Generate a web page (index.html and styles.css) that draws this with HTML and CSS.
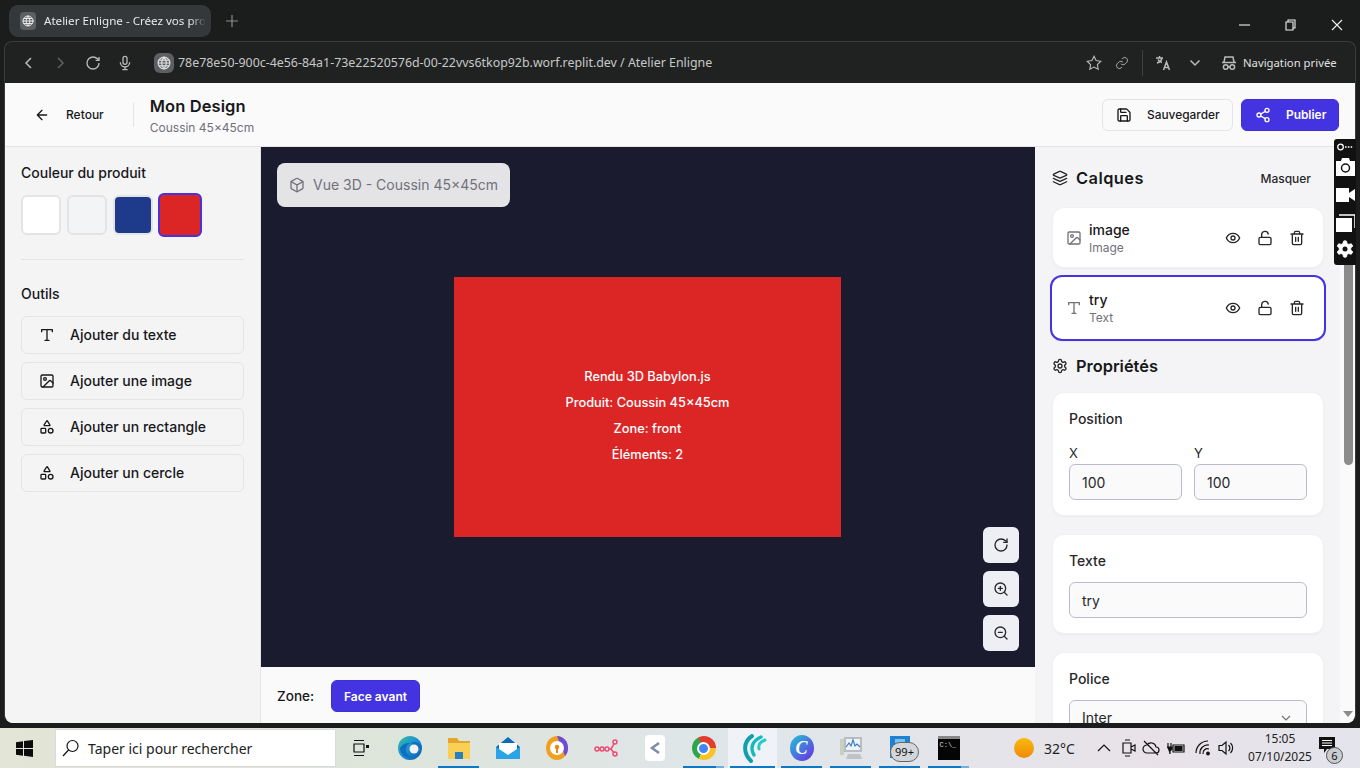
FILE: index.html
```html
<!DOCTYPE html>
<html lang="fr">
<head>
<meta charset="utf-8">
<title>Atelier Enligne</title>
<link rel="stylesheet" href="styles.css">
</head>
<body>
<svg class="defs" width="0" height="0" aria-hidden="true">
  <symbol id="i-globe" viewBox="0 0 24 24"><circle cx="12" cy="12" r="10"/><path d="M12 2a14.5 14.5 0 0 0 0 20 14.5 14.5 0 0 0 0-20M2 12h20M3.5 7h17M3.5 17h17"/></symbol>
  <symbol id="i-arrow" viewBox="0 0 24 24"><path d="M12 19l-7-7 7-7M19 12H5"/></symbol>
  <symbol id="i-save" viewBox="0 0 24 24"><path d="M15.2 3a2 2 0 0 1 1.4.6l3.8 3.8a2 2 0 0 1 .6 1.4V19a2 2 0 0 1-2 2H5a2 2 0 0 1-2-2V5a2 2 0 0 1 2-2z"/><path d="M17 21v-7a1 1 0 0 0-1-1H8a1 1 0 0 0-1 1v7"/><path d="M7 3v4a1 1 0 0 0 1 1h7"/></symbol>
  <symbol id="i-share" viewBox="0 0 24 24"><circle cx="18" cy="5" r="3"/><circle cx="6" cy="12" r="3"/><circle cx="18" cy="19" r="3"/><path d="M8.59 13.51l6.83 3.98M15.41 6.51l-6.82 3.98"/></symbol>
  <symbol id="i-type" viewBox="0 0 24 24"><path d="M4 7V4h16v3M9 20h6M12 4v16"/></symbol>
  <symbol id="i-image" viewBox="0 0 24 24"><rect x="3" y="3" width="18" height="18" rx="2"/><circle cx="9" cy="9" r="2"/><path d="m21 15-3.086-3.086a2 2 0 0 0-2.828 0L6 21"/></symbol>
  <symbol id="i-shapes" viewBox="0 0 24 24"><path d="M8.3 10a.7.7 0 0 1-.626-1.079L11.4 3a.7.7 0 0 1 1.198-.043L16.3 8.9a.7.7 0 0 1-.572 1.1Z"/><rect x="3" y="14" width="7" height="7" rx="1"/><circle cx="17.5" cy="17.5" r="3.5"/></symbol>
  <symbol id="i-box" viewBox="0 0 24 24"><path d="M21 8a2 2 0 0 0-1-1.73l-7-4a2 2 0 0 0-2 0l-7 4A2 2 0 0 0 3 8v8a2 2 0 0 0 1 1.73l7 4a2 2 0 0 0 2 0l7-4A2 2 0 0 0 21 16Z"/><path d="m3.3 7 8.7 5 8.7-5M12 22V12"/></symbol>
  <symbol id="i-rotate" viewBox="0 0 24 24"><path d="M21 12a9 9 0 1 1-9-9c2.52 0 4.93 1 6.74 2.74L21 8"/><path d="M21 3v5h-5"/></symbol>
  <symbol id="i-zoomin" viewBox="0 0 24 24"><circle cx="11" cy="11" r="8"/><path d="m21 21-4.3-4.3M11 8v6M8 11h6"/></symbol>
  <symbol id="i-zoomout" viewBox="0 0 24 24"><circle cx="11" cy="11" r="8"/><path d="m21 21-4.3-4.3M8 11h6"/></symbol>
  <symbol id="i-layers" viewBox="0 0 24 24"><path d="M12.83 2.18a2 2 0 0 0-1.66 0L2.6 6.08a1 1 0 0 0 0 1.83l8.58 3.91a2 2 0 0 0 1.66 0l8.58-3.9a1 1 0 0 0 0-1.83Z"/><path d="m22 17.65-9.17 4.16a2 2 0 0 1-1.66 0L2 17.65"/><path d="m22 12.65-9.17 4.16a2 2 0 0 1-1.66 0L2 12.65"/></symbol>
  <symbol id="i-eye" viewBox="0 0 24 24"><path d="M2 12s3-7 10-7 10 7 10 7-3 7-10 7-10-7-10-7Z"/><circle cx="12" cy="12" r="3"/></symbol>
  <symbol id="i-unlock" viewBox="0 0 24 24"><rect x="3" y="11" width="18" height="11" rx="2"/><path d="M7 11V7a5 5 0 0 1 9.9-1"/></symbol>
  <symbol id="i-trash" viewBox="0 0 24 24"><path d="M3 6h18M19 6v14c0 1-1 2-2 2H7c-1 0-2-1-2-2V6M8 6V4c0-1 1-2 2-2h4c1 0 2 1 2 2v2M10 11v6M14 11v6"/></symbol>
  <symbol id="i-gear" viewBox="0 0 24 24"><path d="M12.22 2h-.44a2 2 0 0 0-2 2v.18a2 2 0 0 1-1 1.73l-.43.25a2 2 0 0 1-2 0l-.15-.08a2 2 0 0 0-2.73.73l-.22.38a2 2 0 0 0 .73 2.73l.15.1a2 2 0 0 1 1 1.72v.51a2 2 0 0 1-1 1.74l-.15.09a2 2 0 0 0-.73 2.73l.22.38a2 2 0 0 0 2.73.73l.15-.08a2 2 0 0 1 2 0l.43.25a2 2 0 0 1 1 1.73V20a2 2 0 0 0 2 2h.44a2 2 0 0 0 2-2v-.18a2 2 0 0 1 1-1.73l.43-.25a2 2 0 0 1 2 0l.15.08a2 2 0 0 0 2.73-.73l.22-.39a2 2 0 0 0-.73-2.73l-.15-.08a2 2 0 0 1-1-1.74v-.5a2 2 0 0 1 1-1.74l.15-.09a2 2 0 0 0 .73-2.73l-.22-.38a2 2 0 0 0-2.73-.73l-.15.08a2 2 0 0 1-2 0l-.43-.25a2 2 0 0 1-1-1.73V4a2 2 0 0 0-2-2z"/><circle cx="12" cy="12" r="3"/></symbol>
</svg>

<div class="tabstrip">
  <div class="tab">
    <span class="favicon"><svg class="ic ic-12"><use href="#i-globe"/></svg></span>
    <span class="tab-title">Atelier Enligne - Créez vos pro</span>
  </div>
  <svg class="newtab" width="12" height="12" viewBox="0 0 12 12"><path d="M6 0v12M0 6h12"/></svg>
  <div class="winctl">
    <svg width="12" height="12" viewBox="0 0 12 12"><path d="M0 6h11"/></svg>
    <svg width="12" height="12" viewBox="0 0 12 12"><path d="M1 3h7v8H1zM3 3V1h7v8H8"/></svg>
    <svg width="12" height="12" viewBox="0 0 12 12"><path d="M1 1l10 10M11 1L1 11"/></svg>
  </div>
</div>

<div class="browser">
  <div class="toolbar">
    <svg class="tb-ic tb-back" width="16" height="16" viewBox="0 0 16 16"><path d="M10 3L5 8l5 5"/></svg>
    <svg class="tb-ic tb-fwd" width="16" height="16" viewBox="0 0 16 16"><path d="M6 3l5 5-5 5"/></svg>
    <svg class="tb-ic tb-reload" width="16" height="16" viewBox="0 0 24 24"><path d="M21 12a9 9 0 1 1-9-9c2.52 0 4.93 1 6.74 2.74L21 8"/><path d="M21 3v5h-5"/></svg>
    <svg class="tb-ic tb-mic" width="16" height="16" viewBox="0 0 24 24"><rect x="9" y="2" width="6" height="12" rx="3"/><path d="M5 11a7 7 0 0 0 14 0M12 18v4M8 22h8"/></svg>
    <span class="urlglobe"><svg class="ic ic-14"><use href="#i-globe"/></svg></span>
    <span class="url">78e78e50-900c-4e56-84a1-73e22520576d-00-22vvs6tkop92b.worf.replit.dev / Atelier Enligne</span>
    <svg class="tb-ic tb-star" width="18" height="18" viewBox="0 0 24 24"><path d="M12 3l2.8 5.8 6.2.9-4.500 4.400 1.100 6.300L12 17.400l-5.600 3 1.100-6.300L3 9.700l6.200-.9z"/></svg>
    <svg class="tb-ic tb-link" width="14" height="14" viewBox="0 0 24 24"><path d="M10 13a5 5 0 0 0 7.500.5l3-3a5 5 0 0 0-7-7l-1.700 1.700M14 11a5 5 0 0 0-7.500-.5l-3 3a5 5 0 0 0 7 7l1.700-1.700"/></svg>
    <span class="tb-sep"></span>
    <svg class="tb-ic tb-tr" width="16" height="16" viewBox="0 0 16 16"><path d="M1 3h7M4.500 1v2M7 3c-.5 2.500-2 4-5 5M3 4.500c.7 1.500 2 2.500 4 3M8.500 15l3-8 3 8M9.500 12.500h4"/></svg>
    <svg class="tb-ic tb-chev" width="12" height="12" viewBox="0 0 12 12"><path d="M1.500 3.500L6 8l4.500-4.500"/></svg>
    <svg class="tb-ic tb-inc" width="16" height="16" viewBox="0 0 16 16"><path d="M3 7l1-5h8l1 5M1 7.500h14"/><circle cx="4.700" cy="12" r="2.300"/><circle cx="11.300" cy="12" r="2.300"/><path d="M7 12h2"/></svg>
    <span class="private">Navigation privée</span>
  </div>

  <div class="app">
    <header class="apphead">
      <button class="back"><svg class="ic ic-16"><use href="#i-arrow"/></svg><span>Retour</span></button>
      <span class="vsep"></span>
      <div class="titles">
        <div class="design">Mon Design</div>
        <div class="product">Coussin 45×45cm</div>
      </div>
      <div class="actions">
        <button class="btn btn-out"><svg class="ic ic-16"><use href="#i-save"/></svg><span>Sauvegarder</span></button>
        <button class="btn btn-pri"><svg class="ic ic-16"><use href="#i-share"/></svg><span>Publier</span></button>
      </div>
    </header>

    <div class="workspace">
      <aside class="left">
        <h3 class="sec-title">Couleur du produit</h3>
        <div class="swatches">
          <span class="sw sw-white"></span>
          <span class="sw sw-gray"></span>
          <span class="sw sw-navy"></span>
          <span class="sw sw-red"></span>
        </div>
        <div class="hr"></div>
        <h3 class="sec-title sec-tools">Outils</h3>
        <div class="tools">
          <button class="tool"><svg class="ic ic-16"><use href="#i-type"/></svg><span>Ajouter du texte</span></button>
          <button class="tool"><svg class="ic ic-16"><use href="#i-image"/></svg><span>Ajouter une image</span></button>
          <button class="tool"><svg class="ic ic-16"><use href="#i-shapes"/></svg><span>Ajouter un rectangle</span></button>
          <button class="tool"><svg class="ic ic-16"><use href="#i-shapes"/></svg><span>Ajouter un cercle</span></button>
        </div>
      </aside>

      <main class="center">
        <div class="stage">
          <div class="badge"><svg class="ic ic-16"><use href="#i-box"/></svg><span>Vue 3D - Coussin 45×45cm</span></div>
          <div class="render">
            <p>Rendu 3D Babylon.js</p>
            <p>Produit: Coussin 45×45cm</p>
            <p>Zone: front</p>
            <p>Éléments: 2</p>
          </div>
          <div class="stagectl">
            <button class="sbtn"><svg class="ic ic-16"><use href="#i-rotate"/></svg></button>
            <button class="sbtn"><svg class="ic ic-16"><use href="#i-zoomin"/></svg></button>
            <button class="sbtn"><svg class="ic ic-16"><use href="#i-zoomout"/></svg></button>
          </div>
        </div>
        <div class="zonebar">
          <span class="zlabel">Zone:</span>
          <button class="zbtn">Face avant</button>
        </div>
      </main>

      <aside class="right">
        <div class="rhead">
          <svg class="ic ic-16"><use href="#i-layers"/></svg>
          <h2 class="rtitle rtitle-wide">Calques</h2>
          <span class="masquer">Masquer</span>
        </div>
        <div class="layer">
          <svg class="ic ic-16 lt-ic"><use href="#i-image"/></svg>
          <div class="lt"><div class="lname">image</div><div class="ltype">Image</div></div>
          <div class="lacts"><svg class="ic ic-16"><use href="#i-eye"/></svg><svg class="ic ic-16"><use href="#i-unlock"/></svg><svg class="ic ic-16"><use href="#i-trash"/></svg></div>
        </div>
        <div class="layer layer-sel">
          <svg class="ic ic-16 lt-ic"><use href="#i-type"/></svg>
          <div class="lt"><div class="lname">try</div><div class="ltype">Text</div></div>
          <div class="lacts"><svg class="ic ic-16"><use href="#i-eye"/></svg><svg class="ic ic-16"><use href="#i-unlock"/></svg><svg class="ic ic-16"><use href="#i-trash"/></svg></div>
        </div>
        <div class="rhead rhead-props">
          <svg class="ic ic-16"><use href="#i-gear"/></svg>
          <h2 class="rtitle">Propriétés</h2>
        </div>
        <section class="card">
          <h4 class="clabel clabel-pos">Position</h4>
          <div class="xy">
            <div class="xyf"><div class="xl">X</div><div class="field">100</div></div>
            <div class="xyf"><div class="xl">Y</div><div class="field">100</div></div>
          </div>
        </section>
        <section class="card">
          <h4 class="clabel">Texte</h4>
          <div class="field">try</div>
        </section>
        <section class="card">
          <h4 class="clabel">Police</h4>
          <div class="field field-sel"><span>Inter</span><svg width="12" height="12" viewBox="0 0 12 12"><path d="M2 4l4 4 4-4"/></svg></div>
        </section>
      </aside>

      <div class="scrollbar">
        <div class="thumb"></div>
        <svg class="sarrow" width="10" height="6" viewBox="0 0 10 6"><path d="M0 0h10L5 6z"/></svg>
      </div>
    </div>
  </div>
</div>

<div class="taskbar">
  <svg class="winlogo" width="17" height="17" viewBox="0 0 17 17"><path d="M0 2.300l7-1v6.700H0zM8 1.100L17 0v8H8zM0 9h7v6.700l-7-1zM8 9h9v8l-9-1.200z"/></svg>
  <div class="search">
    <svg width="18" height="18" viewBox="0 0 18 18"><circle cx="10.500" cy="7" r="5.500"/><path d="M6.500 11L1 17"/></svg>
    <span>Taper ici pour rechercher</span>
  </div>
  <div class="slot"><svg width="16" height="18" viewBox="0 0 16 18"><path d="M1 1.500h10M1 16.500h10M1 5h10v8H1z" fill="none" stroke="#111" stroke-width="1.200"/><rect x="13" y="6" width="3" height="3" fill="#111"/></svg></div>
  <div class="slot"><svg width="26" height="26" viewBox="0 0 26 26"><defs><linearGradient id="ed" x1="0" y1="0" x2="1" y2="1"><stop offset="0" stop-color="#35c1a0"/><stop offset=".5" stop-color="#1b8fd6"/><stop offset="1" stop-color="#0c59a4"/></linearGradient></defs><circle cx="13" cy="13" r="12" fill="url(#ed)"/><path d="M25 14c0-5-4-7-8-7-5 0-8 4-8 8 0 4 3 7 7 7-5 2-13-1-13-9 4-6 9-5 10-5 3 0 5 3 4 6z" fill="#0e6fc0"/><circle cx="17" cy="14" r="4.500" fill="#f2f1ee"/></svg></div>
  <div class="slot slot-on"><svg width="24" height="22" viewBox="0 0 24 22"><path d="M1 1h9l2 3h11v4H1z" fill="#e3a62b"/><path d="M1 6h22v16H1z" fill="#f9cf55"/><path d="M8 15h8v7H8z" fill="#2a7fc1"/></svg></div>
  <div class="slot"><svg width="24" height="24" viewBox="0 0 24 24"><path d="M12 1l12 10v12H0V11z" fill="#0d6cb8"/><path d="M3 7h18v9l-9 4-9-4z" fill="#fff"/><path d="M0 11l12 8 12-8v12H0z" fill="#29a4e8"/></svg></div>
  <div class="slot"><svg width="24" height="26" viewBox="0 0 24 26"><ellipse cx="12" cy="13" rx="11" ry="12" fill="#f0a020"/><path d="M12 1c6 0 11 5 11 12 0 3-1 6-3 8z" fill="#6d4bd8"/><circle cx="12" cy="13" r="7" fill="#fff"/><circle cx="12" cy="12" r="2.200" fill="#e8861c"/><path d="M11 13h2v5h-2z" fill="#e8861c"/></svg></div>
  <div class="slot"><svg width="24" height="18" viewBox="0 0 24 18" fill="none" stroke="#ee4a72" stroke-width="1.500"><circle cx="3" cy="10" r="2"/><circle cx="8" cy="10" r="2"/><circle cx="13" cy="10" r="2"/><circle cx="21" cy="3" r="2"/><circle cx="21" cy="15" r="2"/><path d="M15 10h2l3-5M17 10l3 4"/></svg></div>
  <div class="slot"><span class="whitebox"><svg width="14" height="14" viewBox="0 0 14 14" fill="none" stroke="#7d8ca8" stroke-width="2.500"><path d="M11 2L4 7l7 5"/></svg></span></div>
  <div class="slot slot-on slot-stack"><span class="chrome"><span class="chrome-in"></span></span></div>
  <div class="slot slot-on slot-act"><svg width="28" height="30" viewBox="0 0 28 30" fill="none" stroke-linecap="round"><path d="M12 28C4 20 4 9 13 3" stroke="#119fae" stroke-width="4"/><path d="M15 22C11 15 13 8 22 4" stroke="#17b9bf" stroke-width="3.500"/><path d="M20 16c-1-4 1-7 6-9" stroke="#2cc8c8" stroke-width="3"/></svg></div>
  <div class="slot slot-on"><span class="canva">C</span></div>
  <div class="slot slot-on"><svg width="26" height="26" viewBox="0 0 26 26"><path d="M2 4h4v16H2z" fill="#c9cfbf"/><path d="M6 2h18v15H6z" fill="#b9bcc2"/><path d="M8 4h14v11H8z" fill="#eef3f8"/><path d="M8 12l3-4 2 3 2-6 2 6 2-2 3 3" fill="none" stroke="#3b7dc6" stroke-width="1.200"/><path d="M10 19h12l2 5H8z" fill="#bfc3c8"/></svg></div>
  <div class="slot slot-on"><svg width="24" height="26" viewBox="0 0 24 26"><path d="M2 1h20v22H2z" fill="#1f82d0"/><path d="M7 4h10v4H7z" fill="#7cc0ee"/></svg><span class="cnt">99+</span></div>
  <div class="slot slot-on slot-stack"><span class="term"><span class="term-t">C:\_</span></span></div>
  <div class="tray">
    <span class="sun"></span>
    <span class="temp">32°C</span>
    <svg class="tic t-caret" width="14" height="10" viewBox="0 0 14 10"><path d="M1 8l6-6 6 6"/></svg>
    <svg class="tic t-cam" width="14" height="20" viewBox="0 0 14 20"><path d="M1 5h8v10H1zM9 9l4-2v6l-4-2zM3 2h5M3 18h5"/></svg>
    <svg class="tic t-cloud" width="18" height="16" viewBox="0 0 18 16"><path d="M5 13a4 4 0 0 1 0-8 5 5 0 0 1 9 2 3 3 0 0 1 0 6zM2 1l14 14"/></svg>
    <svg class="tic t-bat" width="18" height="16" viewBox="0 0 18 16"><path d="M6 5h11v7H6z"/><path d="M8 6.500h7v4H8zM1 3v4M4 3v4M0 7h5v2l-2 2v3" fill="#111"/></svg>
    <svg class="tic t-wifi" width="18" height="16" viewBox="0 0 18 16"><path d="M1 13A12 12 0 0 1 13 1M5 14a8 8 0 0 1 9-9M8 14a4.500 4.500 0 0 1 6-5"/><circle cx="13" cy="13.500" r="1.300" fill="#111"/></svg>
    <svg class="tic t-vol" width="16" height="16" viewBox="0 0 16 16"><path d="M1 5.500h3L8 2v12l-4-3.500H1zM10.500 5a4 4 0 0 1 0 6M12.500 3a7 7 0 0 1 0 10"/></svg>
    <div class="clock"><div>15:05</div><div>07/10/2025</div></div>
    <div class="notif">
      <svg width="16" height="16" viewBox="0 0 16 16"><path d="M0 0h16v12H8l-3 4v-4H0z" fill="#111"/><path d="M3 3.500h10M3 6h10M3 8.500h10" stroke="#fff"/></svg>
      <span class="ncnt">6</span>
    </div>
  </div>
</div>

<div class="capture">
  <svg class="cap-top" width="16" height="8" viewBox="0 0 16 8"><circle cx="3.500" cy="4" r="2.800" fill="none" stroke="#fff" stroke-width="1.300"/><path d="M8 4h1.600M10.800 4h1.600M13.600 4h1.600" stroke="#fff" stroke-width="1.600"/></svg>
  <svg class="cap-cam" width="19" height="18" viewBox="0 0 19 18"><path d="M0 3h5l1-3h7l1 3h5v15H0z" fill="#fff"/><circle cx="9.500" cy="10" r="4" fill="none" stroke="#111" stroke-width="1.500"/></svg>
  <svg class="cap-vid" width="19" height="14" viewBox="0 0 19 14"><path d="M0 0h13v14H0zM13 5l6-4v12l-6-4z" fill="#fff"/></svg>
  <svg class="cap-win" width="19" height="18" viewBox="0 0 19 18"><path d="M0 4h16v14H0z" fill="#fff"/><path d="M3 1h16v13" fill="none" stroke="#fff" stroke-width="1.500"/></svg>
  <svg class="cap-gear" width="20" height="20" viewBox="0 0 24 24"><path class="capgear" d="M12.220 2h-.44a2 2 0 0 0-2 2v.18a2 2 0 0 1-1 1.730l-.43.25a2 2 0 0 1-2 0l-.15-.08a2 2 0 0 0-2.730.73l-.22.38a2 2 0 0 0 .73 2.730l.15.1a2 2 0 0 1 1 1.720v.51a2 2 0 0 1-1 1.740l-.15.09a2 2 0 0 0-.73 2.730l.22.38a2 2 0 0 0 2.730.73l.15-.08a2 2 0 0 1 2 0l.43.25a2 2 0 0 1 1 1.730V20a2 2 0 0 0 2 2h.44a2 2 0 0 0 2-2v-.18a2 2 0 0 1 1-1.730l.43-.25a2 2 0 0 1 2 0l.15.08a2 2 0 0 0 2.730-.73l.22-.39a2 2 0 0 0-.73-2.730l-.15-.08a2 2 0 0 1-1-1.740v-.5a2 2 0 0 1 1-1.740l.15-.09a2 2 0 0 0 .73-2.730l-.22-.38a2 2 0 0 0-2.730-.73l-.15.08a2 2 0 0 1-2 0l-.43-.25a2 2 0 0 1-1-1.730V4a2 2 0 0 0-2-2z"/><circle cx="12" cy="12" r="3" fill="#111"/></svg>
</div>
</body>
</html>
```

FILE: styles.css
```css
* { box-sizing: border-box; }
html, body { margin: 0; padding: 0; height: 768px; overflow: hidden; }
body {
  width: 1360px;
  background: #1b1c1c;
  display: flex;
  flex-direction: column;
  font-family: Inter, "Liberation Sans", sans-serif;
  color: #18181b;
  position: relative;
}
.defs { position: absolute; }
button { font: inherit; color: inherit; cursor: pointer; }
h2, h3, h4, p { margin: 0; font-weight: inherit; font-size: inherit; }
.ic { fill: none; stroke: currentColor; stroke-width: 2; stroke-linecap: round; stroke-linejoin: round; flex: none; }
.ic-12 { width: 12px; height: 12px; }
.ic-14 { width: 14px; height: 14px; }
.ic-16 { width: 16px; height: 16px; }

/* browser chrome */
.tabstrip { height: 41px; flex: none; display: flex; align-items: flex-start; padding: 5px 0 0 9px; }
.tab { width: 202px; height: 32px; background: #35383a; border-radius: 9px; display: flex; align-items: center; padding-left: 11px; gap: 8px; overflow: hidden; }
.favicon { width: 16px; height: 18px; border-radius: 4px; background: #5c6063; color: #e8e8e8; display: flex; align-items: center; justify-content: center; flex: none; }
.tab-title { font: 11.6px "Noto Sans", sans-serif; color: #e8e8e8; white-space: nowrap; padding-bottom: 2px; -webkit-mask-image: linear-gradient(90deg, #000 90%, transparent); mask-image: linear-gradient(90deg, #000 90%, transparent); }
.newtab { margin: 10px 0 0 15px; stroke: #8b8d8e; stroke-width: 1.200; fill: none; }
.winctl { margin-left: auto; display: flex; gap: 34px; padding: 14px 17px 0 0; }
.winctl svg { fill: none; stroke: #f0f0f0; stroke-width: 1.100; }
.browser { height: 682px; flex: none; margin: 0 4px; border: 1px solid #3a3c3c; border-bottom: 0; border-radius: 8px; overflow: hidden; display: flex; flex-direction: column; background: #202222; }
.toolbar { height: 41px; flex: none; display: flex; align-items: center; color: #c9cacb; padding-left: 16px; }
.tb-ic { fill: none; stroke: #b8babb; stroke-width: 1.500; flex: none; }
.tb-fwd { margin-left: 15px; stroke: #5e6061; }
.tb-reload { margin-left: 17px; stroke-width: 2; }
.tb-mic { margin-left: 16px; stroke-width: 2; }
.urlglobe { width: 20px; height: 20px; border-radius: 6px; background: #5c6063; color: #e0e0e0; display: flex; align-items: center; justify-content: center; margin-left: 21px; flex: none; }
.url { margin-left: 4px; font: 12.4px "Noto Sans", sans-serif; color: #c7c8c8; white-space: nowrap; width: 900px; flex: none; }
.tb-star { margin-left: 7px; }
.tb-link { margin-left: 12px; }
.tb-sep { width: 1px; height: 26px; background: #3f4141; margin-left: 13px; flex: none; }
.tb-tr { margin-left: 12px; }
.tb-chev { margin-left: 18px; }
.tb-inc { margin-left: 20px; }
.private { margin-left: 6px; font: 11.3px "Noto Sans", sans-serif; color: #e0e0e0; white-space: nowrap; }

/* app */
.app { height: 640px; flex: none; background: #fafafa; display: flex; flex-direction: column; overflow: hidden; border-radius: 0 0 8px 8px; }
.apphead { height: 64px; flex: none; background: #fafafa; border-bottom: 1px solid #e4e4e7; display: flex; align-items: center; padding: 0 16px 0 29px; }
.back { display: flex; align-items: center; gap: 16px; background: none; border: 0; padding: 0; font-size: 12px; font-weight: 500; }
.vsep { width: 1px; height: 24px; background: #e4e4e7; margin-left: 29px; }
.titles { margin-left: 16px; padding-top: 2px; }
.design { font: 600 16.5px/20px Inter, sans-serif; letter-spacing: .1px; }
.product { font-size: 12px; line-height: 17px; color: #71717a; margin-top: 3px; }
.actions { margin-left: auto; display: flex; gap: 8px; }
.btn { height: 32px; border-radius: 6px; display: flex; align-items: center; gap: 15px; font-size: 11.9px; font-weight: 500; padding: 0 13px; }
.btn-out { width: 131px; background: #fafafa; border: 1px solid #e4e4e7; }
.btn-pri { width: 98px; background: #4433e0; border: 1px solid #3f2fd2; color: #fff; font-weight: 600; }

.workspace { flex: 1; min-height: 0; display: flex; }
.left { width: 256px; flex: none; background: #f4f4f5; border-right: 1px solid #e4e4e7; padding: 16px 16px; }
.sec-title { font-size: 14px; font-weight: 500; line-height: 20px; }
.swatches { display: flex; gap: 6px; margin-top: 12px; align-items: center; height: 40px; }
.sw { width: 40px; height: 40px; border-radius: 6px; border: 2px solid #e4e4e7; flex: none; }
.sw-white { background: #fff; }
.sw-gray { background: #f3f4f6; }
.sw-navy { background: #1e3a8a; }
.sw-red { background: #dc2626; border-color: #4433e0; width: 44px; height: 44px; margin-left: -1px; }
.hr { height: 1px; background: #e4e4e7; margin-top: 24px; }
.sec-tools { margin-top: 24px; }
.tools { margin-top: 12px; display: flex; flex-direction: column; gap: 8px; }
.tool { height: 38px; background: #f4f4f5; border: 1px solid #e4e4e7; border-radius: 6px; display: flex; align-items: center; gap: 15px; padding: 0 17px 1px; font-size: 14px; font-weight: 500; text-align: left; }
.tool .ic { margin-top: 1px; }

.center { width: 774px; flex: none; display: flex; flex-direction: column; }
.stage { height: 520px; flex: none; background: #1a1b2e; position: relative; display: flex; align-items: center; justify-content: center; }
.badge { position: absolute; left: 16px; top: 16px; width: 233px; height: 44px; background: #e4e4e7; border-radius: 8px; display: flex; align-items: center; gap: 8px; padding: 0 0 1px 12px; font-size: 14px; color: #71717a; }
.badge .ic { margin-top: 1px; }
.render { width: 387px; height: 260px; margin-right: 1px; padding-top: 18px; background: #dc2626; color: #fff; display: flex; flex-direction: column; align-items: center; justify-content: center; font-size: 12.8px; font-weight: 500; line-height: 26px; }
.stagectl { position: absolute; right: 16px; bottom: 16px; display: flex; flex-direction: column; gap: 8px; }
.sbtn { width: 36px; height: 36px; border: 0; border-radius: 6px; background: #eeeff4; display: flex; align-items: center; justify-content: center; padding: 0; color: #27272a; }
.zonebar { flex: 1; background: #fafafa; display: flex; align-items: flex-start; padding: 13px 0 0 16px; }
.zlabel { font-size: 13.6px; width: 38px; font-weight: 500; line-height: 32px; white-space: nowrap; }
.zbtn { margin-left: 16px; width: 89px; height: 32px; padding: 0; border: 1px solid #3f2fd2; border-radius: 6px; background: #4433e0; color: #fff; font-size: 12px; font-weight: 600; }

.right { width: 305px; flex: none; background: #f4f4f6; padding: 0 16px; overflow: hidden; }
.rhead { height: 60px; display: flex; align-items: center; gap: 8px; padding: 2px 0 0 1px; color: #27272a; }
.rtitle { font: 600 16.4px/20px Inter, sans-serif; color: #18181b; }
.rtitle-wide { letter-spacing: .45px; }
.masquer { margin-left: auto; font-size: 12px; font-weight: 500; margin-right: 13px; }
.layer { width: 272px; height: 61px; margin-left: 1px; background: #fff; border: 1px solid #f0f0f2; border-radius: 12px; box-shadow: 0 1px 2px rgba(0,0,0,.04); display: flex; align-items: center; padding: 0 18px 0 13px; }
.layer-sel { width: 276px; height: 66px; margin: 7px 0 0 -1px; border: 2px solid #4433e0; padding: 0 19px 0 14px; }
.lt-ic { color: #71717a; }
.lt { margin-left: 7px; }
.lname { font-size: 14px; font-weight: 500; line-height: 20px; }
.ltype { font-size: 12px; line-height: 16px; color: #71717a; }
.lacts { margin-left: auto; display: flex; gap: 16px; color: #27272a; }
.rhead-props { height: 51px; padding-top: 0; padding-bottom: 1px; }
.card { width: 272px; margin: 0 0 18px 1px; background: #fff; border: 1px solid #f0f0f2; border-radius: 12px; box-shadow: 0 1px 2px rgba(0,0,0,.04); padding: 16px 16px 15px; }
.clabel { font-size: 14px; font-weight: 500; line-height: 20px; margin-bottom: 11px; color: #27272a; }
.clabel-pos { margin-bottom: 16px; }
.xy { display: flex; gap: 12px; }
.xyf { flex: 1; min-width: 0; }
.xl { font-size: 13px; line-height: 16px; margin-bottom: 3px; font-weight: 400; color: #27272a; }
.field { height: 36px; border: 1px solid #b9bcd0; border-radius: 6px; background: #fafafa; font-size: 14px; line-height: 36px; padding-left: 12px; color: #27272a; }
.field-sel { display: flex; align-items: center; justify-content: space-between; padding-right: 14px; }
.field-sel svg { fill: none; stroke: #71717a; stroke-width: 1.200; }

.scrollbar { flex: 1; background: #fafafa; padding: 0 3px 6px; display: flex; flex-direction: column; justify-content: space-between; align-items: center; }
.thumb { width: 9px; height: 318px; background: #8c8c8c; border-radius: 0 0 5px 5px; }
.sarrow { fill: #8c8c8c; }

/* taskbar */
.taskbar { height: 40px; margin-top: 5px; flex: none; background: linear-gradient(90deg, #e3e5d6 0%, #dde4d8 25%, #dfe6ea 55%, #e8e2e8 85%, #e4e4ec 100%); display: flex; align-items: center; padding-left: 16px; }
.winlogo { fill: #0c0c0c; flex: none; }
.search { margin-left: 22px; width: 281px; height: 38px; flex: none; background: #fff; border: 1px solid #d9dadb; display: flex; align-items: center; padding-left: 6px; gap: 8px; font: 14px "Noto Sans", sans-serif; color: #222; }
.search svg { fill: none; stroke: #111; stroke-width: 1.200; flex: none; }
.slot { width: 49px; height: 40px; flex: none; display: flex; align-items: center; justify-content: center; position: relative; }
.slot-on::after { content: ""; position: absolute; left: 4px; right: 4px; bottom: 0; height: 2px; background: #0b78c8; }
.slot-act { background: #eff3f7; }
.slot-act::after { left: 2px; right: 2px; }
.slot-stack::after { background: linear-gradient(90deg, #0b78c8 80%, #6fb0e0 80%); }
.whitebox { width: 20px; height: 26px; background: #fff; border-radius: 4px; display: flex; align-items: center; justify-content: center; }
.chrome { width: 24px; height: 24px; border-radius: 50%; background: conic-gradient(from -30deg, #e33b2e 0 33%, #f7c325 33% 66%, #2da44e 66% 100%); display: flex; align-items: center; justify-content: center; }
.chrome-in { width: 9px; height: 9px; border-radius: 50%; background: #4285f4; border: 2px solid #fff; box-sizing: content-box; }
.canva { width: 24px; height: 26px; border-radius: 50%; background: linear-gradient(135deg, #1fc6d6, #5d49e0 80%); color: #fff; font: italic 700 18px/26px "Liberation Serif", serif; text-align: center; }
.cnt { position: absolute; left: 15px; top: 14px; width: 29px; height: 20px; border-radius: 10px; background: #d3d6da; border: 1px solid #666; font: 11px/18px "Noto Sans", sans-serif; color: #111; text-align: center; }
.term { width: 22px; height: 24px; background: linear-gradient(#888 0 3px, #050505 3px); display: block; }
.term-t { display: block; font: 7px/12px "Liberation Mono", monospace; color: #ddd; padding: 3px 0 0 2px; }
.tray { flex: 1; display: flex; align-items: center; height: 40px; }
.sun { width: 20px; height: 20px; border-radius: 50%; background: linear-gradient(#f8b90f, #f08a0a); margin-left: 41px; flex: none; }
.temp { margin-left: 10px; font: 14px "Noto Sans", sans-serif; color: #222; width: 32px; flex: none; white-space: nowrap; }
.tic { fill: none; stroke: #111; stroke-width: 1.200; flex: none; }
.t-caret { margin-left: 21px; }
.t-cam { margin-left: 11px; }
.t-cloud { margin-left: 6px; }
.t-bat { margin-left: 7px; }
.t-wifi { margin-left: 10px; }
.t-vol { margin-left: 5px; }
.clock { width: 64px; margin-left: 14px; flex: none; text-align: center; font: 12px/18px "Noto Sans", sans-serif; color: #222; }
.notif { margin-left: 7px; width: 24px; height: 30px; position: relative; flex: none; padding-top: 4px; }
.ncnt { position: absolute; left: 7px; top: 14px; width: 17px; height: 17px; border-radius: 50%; background: #c9ccd0; border: 1px solid #555; font: 11px/15px "Noto Sans", sans-serif; text-align: center; color: #111; }

/* floating capture widget */
.capture { position: absolute; left: 1334px; top: 139px; width: 22px; height: 126px; background: #111; border-radius: 3px 0 0 3px; display: flex; flex-direction: column; align-items: center; padding-top: 4px; overflow: hidden; }
.capture svg { flex: none; }
.cap-cam { margin-top: 7px; }
.cap-vid { margin-top: 12px; }
.cap-win { margin-top: 12px; }
.cap-gear { margin-top: 7px; }
.capgear { fill: #fff; stroke: #fff; }
```
